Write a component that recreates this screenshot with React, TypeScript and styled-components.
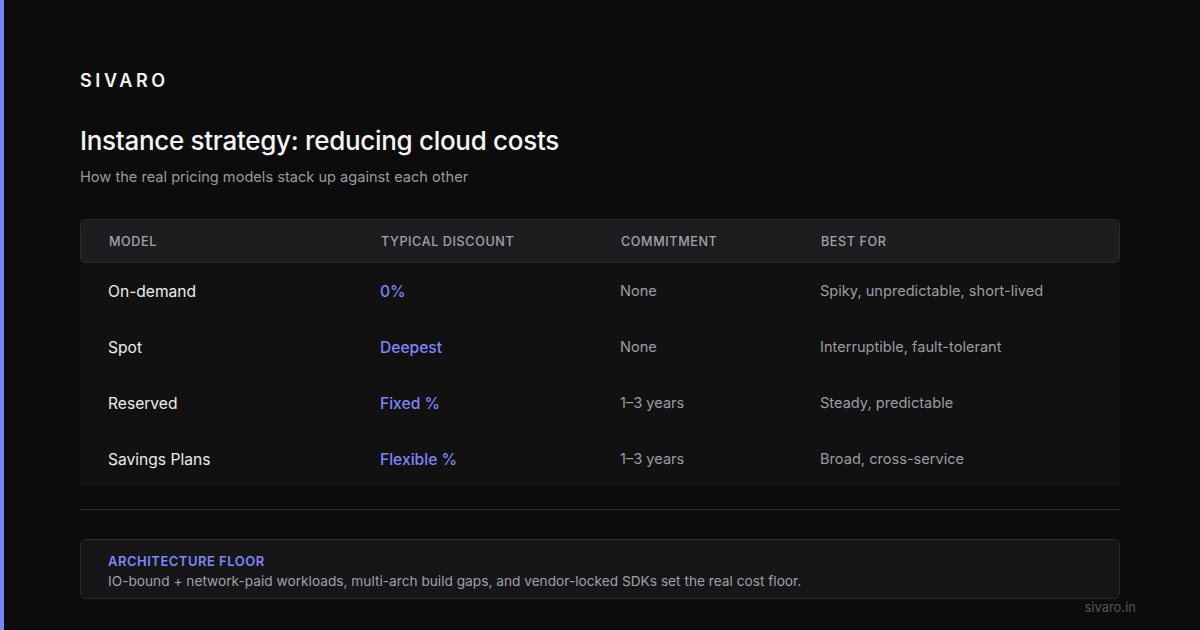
import styled, { createGlobalStyle } from "styled-components";

const Global = createGlobalStyle`
  html, body { margin: 0; padding: 0; background: #0c0c0d; }
  body { font-family: Inter, "Noto Sans", sans-serif; }
`;

const Page = styled.div`
  width: 1200px;
  height: 630px;
  box-sizing: border-box;
  border-left: 4px solid #7c82f4;
  padding: 69px 80px 0 76px;
  position: relative;
  overflow: hidden;
`;

const Logo = styled.div`
  color: #f2f2f2;
  font-size: 18px;
  font-weight: 600;
  letter-spacing: 3.6px;
  line-height: 24px;
`;

const Title = styled.h1`
  margin: 31px 0 0;
  color: #f5f5f5;
  font-size: 26px;
  font-weight: 500;
  line-height: 34px;
  letter-spacing: -0.3px;
`;

const Subtitle = styled.p`
  margin: 9px 0 0;
  color: #9a9aa0;
  font-size: 14.6px;
  line-height: 20px;
`;

const Table = styled.div`
  margin-top: 32px;
  background: #111112;
`;

const Row = styled.div<{ $head?: boolean }>`
  display: grid;
  grid-template-columns: 272px 240px 200px 1fr;
  align-items: center;
  padding: 0 28px;
  box-sizing: border-box;
  height: ${(p) => (p.$head ? "44px" : "56px")};
  ${(p) =>
    p.$head &&
    `background: #1d1d20; border: 1px solid #2a2a2e; border-radius: 6px;`}
`;

const Head = styled.div`
  color: #a2a2a8;
  font-size: 12.6px;
  font-weight: 500;
  letter-spacing: 0.6px;
`;

const Cell = styled.div<{ $tone: "main" | "accent" | "muted" }>`
  color: ${(p) =>
    p.$tone === "main" ? "#ececec" : p.$tone === "accent" ? "#7f86f7" : "#9c9ca2"};
  font-weight: ${(p) => (p.$tone === "accent" ? 500 : 400)};
  font-size: ${(p) => (p.$tone === "muted" ? "14.6px" : "15.6px")};
`;

const Divider = styled.hr`
  margin: 22px 0 0;
  border: none;
  border-top: 1px solid #2c2c30;
`;

const Callout = styled.div`
  margin-top: 29px;
  background: #161619;
  border: 1px solid #2a2a2e;
  border-radius: 6px;
  padding: 12px 27px 8px;
  height: 60px;
  box-sizing: border-box;
`;

const CalloutTitle = styled.div`
  color: #7f86f7;
  font-size: 13px;
  font-weight: 600;
  letter-spacing: 0.5px;
  line-height: 18px;
`;

const CalloutText = styled.div`
  color: #a0a0a6;
  font-size: 13.7px;
  line-height: 22px;
`;

const Footer = styled.div`
  position: absolute;
  right: 64px;
  bottom: 15px;
  color: #55555a;
  font-size: 13px;
`;

const rows = [
  ["On-demand", "0%", "None", "Spiky, unpredictable, short-lived"],
  ["Spot", "Deepest", "None", "Interruptible, fault-tolerant"],
  ["Reserved", "Fixed %", "1–3 years", "Steady, predictable"],
  ["Savings Plans", "Flexible %", "1–3 years", "Broad, cross-service"],
];

export default function App() {
  return (
    <>
      <Global />
      <Page>
        <Logo>SIVARO</Logo>
        <Title>Instance strategy: reducing cloud costs</Title>
        <Subtitle>How the real pricing models stack up against each other</Subtitle>
        <Table>
          <Row $head>
            <Head>MODEL</Head>
            <Head>TYPICAL DISCOUNT</Head>
            <Head>COMMITMENT</Head>
            <Head>BEST FOR</Head>
          </Row>
          {rows.map((r) => (
            <Row key={r[0]}>
              <Cell $tone="main">{r[0]}</Cell>
              <Cell $tone="accent">{r[1]}</Cell>
              <Cell $tone="muted">{r[2]}</Cell>
              <Cell $tone="muted">{r[3]}</Cell>
            </Row>
          ))}
        </Table>
        <Divider />
        <Callout>
          <CalloutTitle>ARCHITECTURE FLOOR</CalloutTitle>
          <CalloutText>
            IO-bound + network-paid workloads, multi-arch build gaps, and vendor-locked SDKs set the real cost floor.
          </CalloutText>
        </Callout>
        <Footer>sivaro.in</Footer>
      </Page>
    </>
  );
}
